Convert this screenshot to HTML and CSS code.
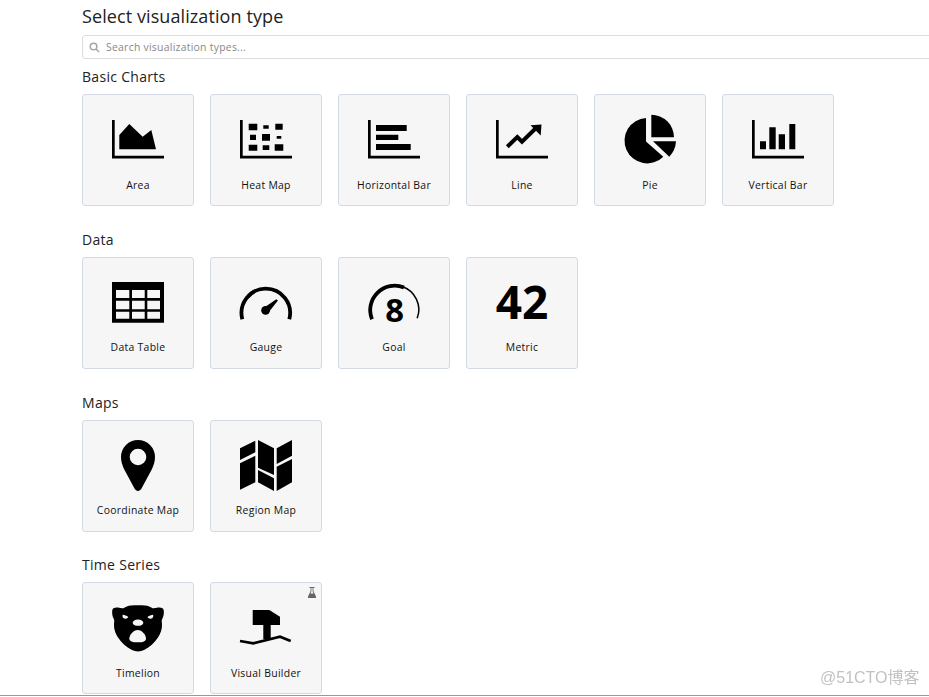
FILE: index.html
```html
<!DOCTYPE html>
<html lang="en">
<head>
<meta charset="utf-8">
<title>Select visualization type</title>
<link rel="stylesheet" href="styles.css">
</head>
<body>
<div class="page">
  <main class="main">
    <h1 class="title">Select visualization type</h1>
    <div class="search">
      <svg class="search-icon" viewBox="0 0 12 12"><circle cx="5" cy="5" r="3.6"/><path d="M7.6 7.6 11 11"/></svg>
      <span class="search-text">Search visualization types...</span>
    </div>

    <section class="group">
      <h2 class="group-title">Basic Charts</h2>
      <div class="cards">
        <div class="card">
          <svg class="icon" viewBox="0 0 52 52"><path d="M0 6h2.7v35.7H52v2.7H0z"/><path d="M7.3 21 17.3 10l13.4 12.7 8.6-6.7L44 35.3H7.3z"/></svg>
          <span class="label">Area</span>
        </div>
        <div class="card">
          <svg class="icon" viewBox="0 0 52 52"><path d="M0 6h2.7v35.7H52v2.7H0z"/><path d="M8.7 9.7h8.6v6.6H8.7zM23.3 11.3h5.4v3.4h-5.4zM35.3 9.7h7.4v6h-7.4zM10 20.7h6V26h-6zM22 20h8v6.7h-8zM36.7 22h4.6v2.7h-4.6zM8.7 30.7h8.6v6H8.7zM22.7 31.3h6.6V36h-6.6zM34.7 30.3h8.6v6.4h-8.6z"/></svg>
          <span class="label">Heat Map</span>
        </div>
        <div class="card">
          <svg class="icon" viewBox="0 0 52 52"><path d="M0 6h2.7v35.7H52v2.7H0z"/><path d="M8 11h30.7v6H8zM8 20.7h22.3V26H8zM8 30h34.7v6H8z"/></svg>
          <span class="label">Horizontal Bar</span>
        </div>
        <div class="card">
          <svg class="icon" viewBox="0 0 52 52"><path d="M0 6h2.7v35.7H52v2.7H0z"/><path class="stroke" d="M11.3 32.7 21.3 23 26 27.7 39 15"/><path d="M45.500 10.500 34.500 11.300 44.700 21.500z"/></svg>
          <span class="label">Line</span>
        </div>
        <div class="card">
          <svg class="icon" viewBox="0 0 52 52"><path d="M22 4V27.5L39.3 42.7A22.7 22.7 0 1 1 22 4z"/><path d="M27.3.7A22.7 22.7 0 0 1 50 23.3H27.3z"/><path d="M29 27.3H52A24 24 0 0 1 45.3 42.7z"/></svg>
          <span class="label">Pie</span>
        </div>
        <div class="card">
          <svg class="icon" viewBox="0 0 52 52"><path d="M0 6h2.7v35.7H52v2.7H0z"/><path d="M8 27.3h6v8H8zM17.3 13.3h6.4v22h-6.4zM26.7 20.3H33v15h-6.3zM37.3 10h6v25.3h-6z"/></svg>
          <span class="label">Vertical Bar</span>
        </div>
      </div>
    </section>

    <section class="group">
      <h2 class="group-title">Data</h2>
      <div class="cards">
        <div class="card">
          <svg class="icon" viewBox="0 0 52 52"><path d="M0 5h52v40.7H0z"/><path class="cell" d="M4 13h13.3v8H4zM20 13h12.7v8H20zM35.3 13H48v8H35.3zM4 23.7h13.3v8.6H4zM20 23.7h12.7v8.6H20zM35.3 23.7H48v8.6H35.3zM4 34.7h13.3v7H4zM20 34.7h12.7v7H20zM35.3 34.7H48v7H35.3z"/></svg>
          <span class="label">Data Table</span>
        </div>
        <div class="card">
          <svg class="icon" viewBox="0 0 52 52"><path class="arc" d="M2.300 42.200A24.300 24.300 0 1 1 49.300 42.200"/><circle cx="25.600" cy="33.300" r="4.400"/><path d="M23.900 30.800 36.300 22.300 37.900 23.600 28.500 35.600z"/></svg>
          <span class="label">Gauge</span>
        </div>
        <div class="card">
          <svg class="icon" viewBox="0 0 52 52"><path class="arc" d="M4 42.3A24.4 24.4 0 0 1 36 10.6"/><path class="arc-thin" d="M34 9.5A24.4 24.4 0 0 1 49.2 41.3"/><text class="goal-num" x="26.7" y="44.5">8</text></svg>
          <span class="label">Goal</span>
        </div>
        <div class="card">
          <svg class="icon" viewBox="0 0 52 52"><text class="metric-num" x="26" y="42">42</text></svg>
          <span class="label">Metric</span>
        </div>
      </div>
    </section>

    <section class="group">
      <h2 class="group-title">Maps</h2>
      <div class="cards">
        <div class="card">
          <svg class="icon" viewBox="0 0 52 52"><path fill-rule="evenodd" d="M26 0A17 17 0 0 1 43 17C43 22 41.5 25.500 40 29L29.500 48.500C27.800 51.800 24.200 51.800 22.500 48.500L12 29C10.500 25.500 9 22 9 17A17 17 0 0 1 26 0zM26 8.700A8.300 8.300 0 1 0 26 25.300 8.300 8.300 0 1 0 26 8.700z"/></svg>
          <span class="label">Coordinate Map</span>
        </div>
        <div class="card">
          <svg class="icon" viewBox="0 0 52 52"><path d="M0 8.300 15.300.7V12.300L0 20zM0 23.300 15.300 15.700V42.300L0 49.700zM18 0 34 8.300V35L18 27.700zM18 30 34 38.300V51L18 42.300zM36.700 8.300 52 0V15.700L36.700 24zM36.700 26.700 52 19V42.300L36.700 51z"/></svg>
          <span class="label">Region Map</span>
        </div>
      </div>
    </section>

    <section class="group">
      <h2 class="group-title">Time Series</h2>
      <div class="cards">
        <div class="card">
          <svg class="icon" viewBox="0 0 52 52"><path d="M.3 8C1 5.800 3.500 5.200 6 5.600 8 6 10 6.500 11.500 6.200 13.500 4.800 16 3.700 19 3.500 23.500 3 28.500 3 33 3.500 36 3.700 38.500 4.800 40.500 6.200 42 6.500 44 6 46 5.600 48.500 5.200 51 5.800 51.700 8 52.200 11 51.600 14.500 50.200 17 49.500 18.300 49.800 20 50 22 50.300 27 48.500 31.500 46 35.500 42.500 41 37.500 45 32.500 47.800 30 49 28 49.500 26 49.500 24 49.500 22 49 19.500 47.800 14.500 45 9.500 41 6 35.500 3.500 31.500 1.700 27 2 22 2.200 20 2.500 18.300 1.800 17 .4 14.500-.2 11 .3 8z"/><path class="cell" d="M10.800 12.700C12.500 12.800 14.500 13.600 16.300 15 15.500 16.800 12.800 17.300 11.300 16 10.500 15.200 10.300 13.800 10.800 12.700zM41 12.700C39.300 12.800 37.300 13.600 35.500 15 36.300 16.800 39 17.300 40.500 16 41.300 15.200 41.500 13.800 41 12.700z"/><ellipse class="cell" cx="26" cy="20.700" rx="5.300" ry="3.100"/><path class="cell" d="M25.700 28C30 28 34 33 34 36.500 34 39.500 31 40.300 25.700 40.300 20.500 40.300 17.300 39.500 17.300 36.500 17.300 33 21.500 28 25.700 28z"/></svg>
          <span class="label">Timelion</span>
        </div>
        <div class="card">
          <svg class="flask" viewBox="0 0 8 11"><path d="M1.500 0H6.500V1H5.400V4L8 9.500V11H0V9.500L2.600 4V1H1.500zM3.400 1V4.200L2.400 6.500H5.600L4.600 4.200V1z" fill-rule="evenodd"/></svg>
          <svg class="icon" viewBox="0 0 52 52"><path d="M12.700 8H29.300L40 14.700V23H30.700V37H23.300V23H12.700z"/><path class="stroke-thin" d="M0 39 13.300 41.300 40 34.700 50.700 39"/></svg>
          <span class="label">Visual Builder</span>
        </div>
      </div>
    </section>
  </main>
  <div class="watermark">@51CTO博客</div>
</div>
</body>
</html>
```

FILE: styles.css
```css
* { box-sizing: border-box; }
html, body { margin: 0; padding: 0; overflow: hidden; background: #fff; }
body { height: 697px; font-family: "Open Sans", "Noto Sans", sans-serif; color: #111; }

.page { position: relative; height: 696px; border-bottom: 1px solid #999; overflow: hidden; }
.main { padding-left: 82px; width: 960px; }

.title { margin: 0; height: 35px; font-size: 18px; line-height: 33px; font-weight: 400; color: #222; letter-spacing: .09px; }

.search { display: flex; align-items: center; height: 24px; gap: 6px; padding-left: 6px; border: 1px solid #ddd; border-radius: 3px; margin-bottom: 9.300px; }
.search-icon { width: 11px; height: 11px; fill: none; stroke: #a5a5a5; stroke-width: 1.6; }
.search-text { font-size: 10.400px; color: #888; letter-spacing: .27px; }

.group { height: 162.670px; }
.group-title { margin: 0; height: 26px; font-size: 14px; line-height: 17px; font-weight: 400; color: #222; letter-spacing: .3px; }
.cards { display: flex; gap: 16px; }

.card { position: relative; display: flex; flex-direction: column; align-items: center; width: 112px; height: 112px; padding-top: 19px; background: #f6f6f6; border: 1px solid #d3dae6; border-radius: 3px; }
.icon { display: block; width: 52px; height: 52px; fill: #000; overflow: visible; }
.label { margin-top: 10.500px; font-size: 10.400px; line-height: 16px; color: #111; letter-spacing: .3px; white-space: nowrap; }

.cell { fill: #f6f6f6; }
.stroke { fill: none; stroke: #000; stroke-width: 4; }
.stroke-thin { fill: none; stroke: #000; stroke-width: 2.600; }
.arc { fill: none; stroke: #000; stroke-width: 3.800; }
.arc-thin { fill: none; stroke: #000; stroke-width: 1.500; }
.goal-num { font-family: "Open Sans", sans-serif; font-weight: 700; font-size: 32.800px; text-anchor: middle; }
.metric-num { font-family: "Open Sans", sans-serif; font-weight: 700; font-size: 46px; text-anchor: middle; }

.flask { position: absolute; top: 3.500px; right: 5px; width: 8px; height: 11px; fill: #666; }

.watermark { position: absolute; left: 820px; top: 668px; font-family: "Liberation Sans", "Noto Sans CJK SC", sans-serif; font-size: 16px; line-height: 20px; color: #c2c2c2; filter: blur(.4px); }
```
